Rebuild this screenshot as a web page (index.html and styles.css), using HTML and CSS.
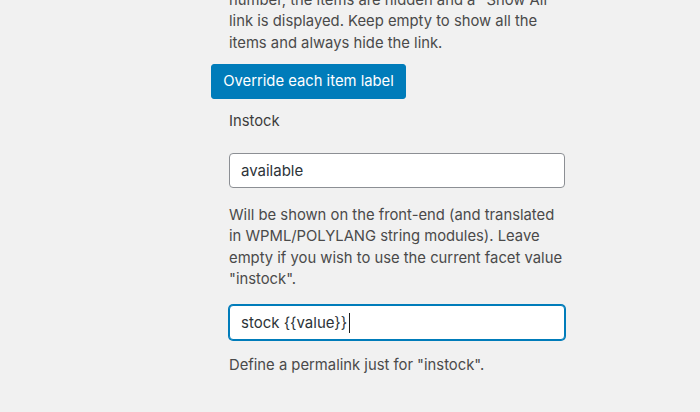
FILE: index.html
```html
<!DOCTYPE html>
<html>
<head>
<meta charset="utf-8">
<link rel="stylesheet" href="styles.css">
</head>
<body>
<div class="panel">
  <p class="intro">number, the items are hidden and a "Show All"<br>link is displayed. Keep empty to show all the<br>items and always hide the link.</p>
  <button class="btn" type="button">Override each item label</button>
  <div class="field">
    <label class="label" for="lbl">Instock</label>
    <input class="input" id="lbl" type="text" value="available">
    <p class="desc">Will be shown on the front-end (and translated<br>in WPML/POLYLANG string modules). Leave<br>empty if you wish to use the current facet value<br>"instock".</p>
    <div class="focus-wrap">
      <input class="input focus" type="text" value="stock {{value}}">
      <span class="caret"></span>
    </div>
    <p class="desc desc-last">Define a permalink just for "instock".</p>
  </div>
</div>
</body>
</html>
```

FILE: styles.css
```css
html, body {
  margin: 0;
  padding: 0;
  background: #f1f1f1;
  height: 100%;
  overflow: hidden;
}
body {
  font-family: Inter, "Liberation Sans", Arial, sans-serif;
  font-size: 14.8px;
  line-height: 21.3px;
  color: #444;
}
.panel {
  padding-left: 229px;
  display: flex;
  flex-direction: column;
  align-items: flex-start;
  margin-top: -10px;
}
.intro {
  margin: 0;
  color: #4a4a4a;
}
.btn {
  margin: 10px 0 0 -18px;
  height: 35px;
  width: 195px;
  padding: 0;
  white-space: nowrap;
  background: #007cba;
  border: 1px solid #007cba;
  border-radius: 3px;
  color: #fff;
  font-family: inherit;
  font-size: 14.8px;
  text-align: center;
}
.field {
  display: flex;
  flex-direction: column;
  align-items: flex-start;
}
.label {
  margin-top: 12px;
  color: #3c3c3c;
}
.input {
  box-sizing: border-box;
  margin-top: 21px;
  width: 336px;
  height: 35px;
  padding: 0 11px;
  border: 1px solid #8c8f94;
  border-radius: 4px;
  background: #fff;
  color: #2c3338;
  font-family: inherit;
  font-size: 15px;
  outline: none;
}
.focus-wrap {
  position: relative;
  margin-top: 15px;
}
.input.focus {
  display: block;
  margin-top: 0;
  border-color: #007cba;
  box-shadow: 0 0 0 1px #007cba;
}
.caret {
  position: absolute;
  left: 120px;
  top: 8px;
  width: 1px;
  height: 20px;
  background: #1e1e1e;
}
.desc {
  margin: 17px 0 0;
  color: #4a4a4a;
}
.desc-last {
  margin-top: 15px;
}
```
